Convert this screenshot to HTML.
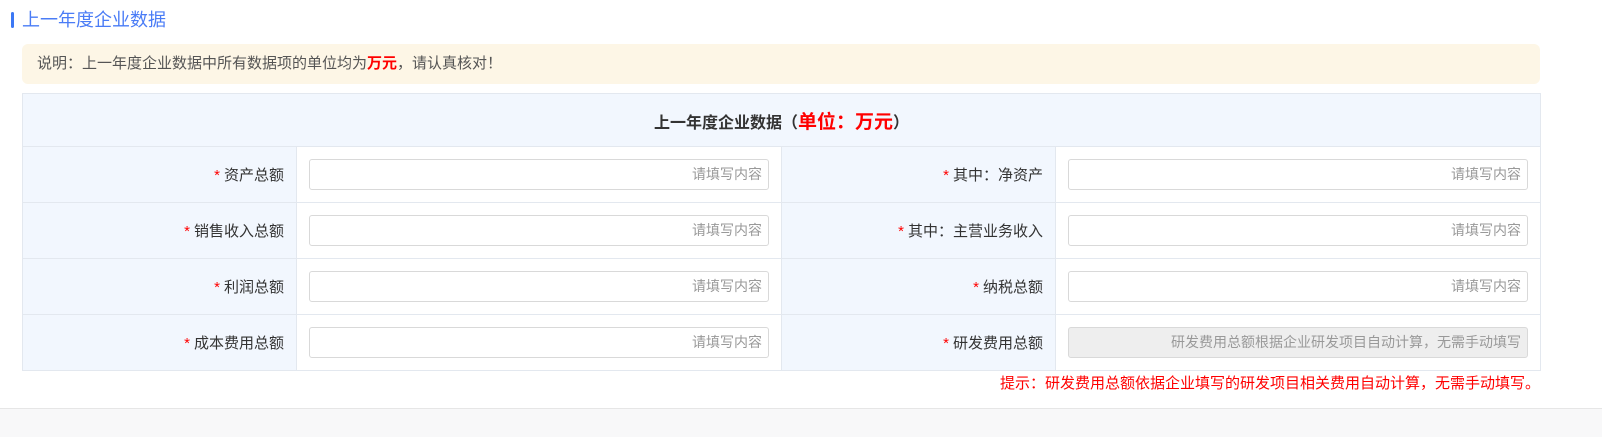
<!DOCTYPE html>
<html><head><meta charset="utf-8"><style>
*{margin:0;padding:0;box-sizing:border-box}
body{width:1602px;height:437px;background:#f8f8f9;font-family:"Liberation Sans","Noto Sans CJK SC",sans-serif;font-size:15px;color:#333;position:relative;overflow:hidden}
.main{position:absolute;left:0;top:0;width:1602px;height:409px;background:#fff;border-bottom:1px solid #e6e6e6}
.bar{position:absolute;left:11px;top:12px;width:3px;height:16px;background:#3c78f5;border-radius:2px}
.title{position:absolute;left:22px;top:9px;font-size:18px;color:#4a7cf6;line-height:22px}
.note{position:absolute;left:22px;top:44px;width:1518px;height:40px;background:#fdf6e6;border-radius:6px;line-height:40px;padding-left:15px;color:#555;font-size:15px}
.note b{color:#f00;font-weight:bold}
table{position:absolute;left:22px;top:93px;width:1519px;border-collapse:collapse}
td{border:1px solid #e3e8ef;height:56px}
.hd{height:53px;background:#f2f7fe;text-align:center;font-weight:bold;font-size:16px;color:#333}
.hd span{color:#f00;font-size:19px}
.lb{width:274px;background:#f2f7fe;text-align:right;padding-right:12px;font-size:15px;color:#333}
.lb i{color:#f00;font-style:normal;margin-right:4px}
.in{width:485px;padding:0 12px}
.box{height:31px;border:1px solid #d9d9d9;border-radius:3px;text-align:right;line-height:29px;padding-right:6px;color:#999;font-size:14px;background:#fff}
.box.dis{background:#eeeeee;color:#999}
.tip{position:absolute;right:62px;top:374px;color:#f00;font-size:15px;line-height:20px}
</style></head><body>
<div class="main">
<div class="bar"></div>
<div class="title">上一年度企业数据</div>
<div class="note">说明：上一年度企业数据中所有数据项的单位均为<b>万元</b>，请认真核对！</div>
<table>
<tr><td class="hd" colspan="4">上一年度企业数据（<span>单位：万元</span>）</td></tr>
<tr><td class="lb"><i>*</i>资产总额</td><td class="in"><div class="box">请填写内容</div></td><td class="lb"><i>*</i>其中：净资产</td><td class="in"><div class="box">请填写内容</div></td></tr>
<tr><td class="lb"><i>*</i>销售收入总额</td><td class="in"><div class="box">请填写内容</div></td><td class="lb"><i>*</i>其中：主营业务收入</td><td class="in"><div class="box">请填写内容</div></td></tr>
<tr><td class="lb"><i>*</i>利润总额</td><td class="in"><div class="box">请填写内容</div></td><td class="lb"><i>*</i>纳税总额</td><td class="in"><div class="box">请填写内容</div></td></tr>
<tr><td class="lb"><i>*</i>成本费用总额</td><td class="in"><div class="box">请填写内容</div></td><td class="lb"><i>*</i>研发费用总额</td><td class="in"><div class="box dis">研发费用总额根据企业研发项目自动计算，无需手动填写</div></td></tr>
</table>
<div class="tip">提示：研发费用总额依据企业填写的研发项目相关费用自动计算，无需手动填写。</div>
</div>
</body></html>
